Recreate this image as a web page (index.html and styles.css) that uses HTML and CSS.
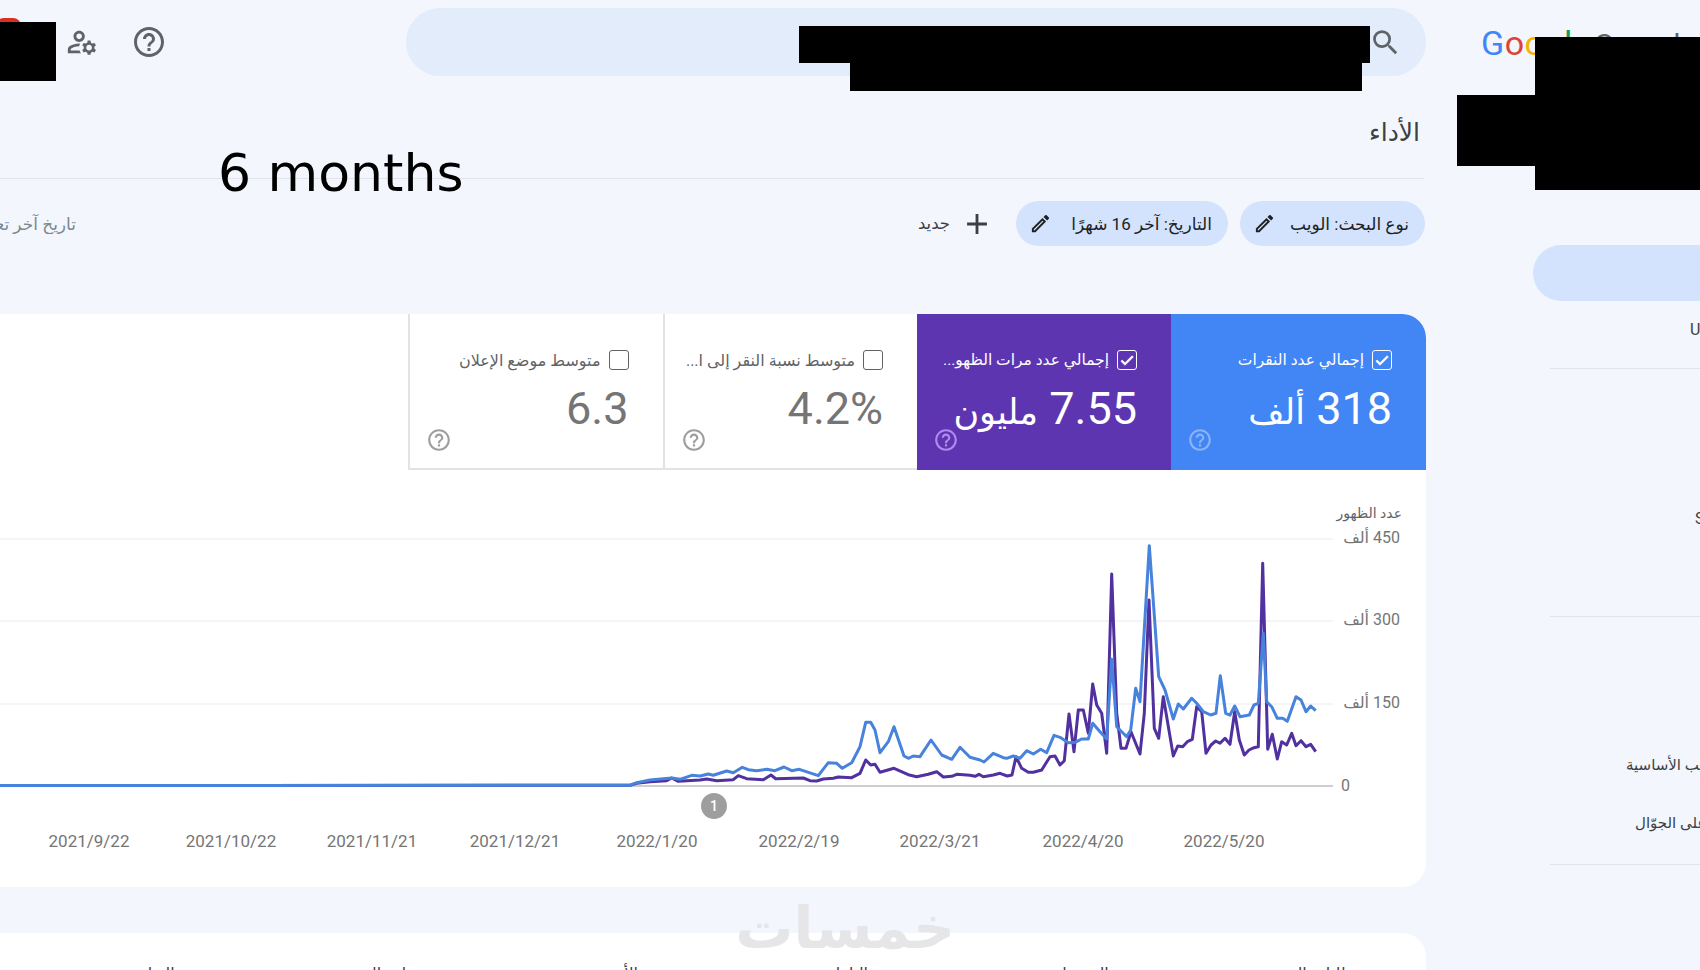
FILE: index.html
```html
<!DOCTYPE html>
<html lang="ar" dir="rtl">
<head>
<meta charset="UTF-8">
<title>الأداء - Search Console</title>
<link rel="stylesheet" href="styles.css">
</head>
<body>
<aside class="side">
    <div class="logo"><span class="g-blue">G</span><span class="g-red">o</span><span class="g-yellow">o</span><span class="g-blue">g</span><span class="g-green">l</span><span class="g-red">e</span> <span class="logo-rest">Search Console</span></div>
    <div class="side-pill"></div>
    <div class="side-group side-first"><div class="side-item">URL</div></div>
    <div class="side-group side-second"><div class="side-item">SEO</div></div>
    <div class="side-group side-third">
        <div class="side-item side-vitals">مؤشرات أداء الويب الأساسية</div>
        <div class="side-item side-mobile">سهولة الاستخدام على الجوّال</div>
    </div>
</aside>

<main class="main">
    <header class="topbar">
        <div class="search">
            <svg class="search-icon" viewBox="0 0 24 24"><path d="M15.5 14h-.79l-.28-.27A6.47 6.47 0 0 0 16 9.5 6.5 6.5 0 1 0 9.5 16c1.61 0 3.09-.59 4.23-1.57l.27.28v.79l5 4.99L20.49 19l-4.99-5zm-6 0C7.01 14 5 11.99 5 9.5S7.01 5 9.5 5 14 7.01 14 9.5 11.99 14 9.5 14z"/></svg>
        </div>
        <div class="top-icons">
            <svg class="help-big" viewBox="0 0 24 24"><path d="M11 18h2v-2h-2v2zm1-16C6.48 2 2 6.48 2 12s4.48 10 10 10 10-4.48 10-10S17.52 2 12 2zm0 18c-4.41 0-8-3.59-8-8s3.59-8 8-8 8 3.59 8 8-3.59 8-8 8zm0-14c-2.21 0-4 1.79-4 4h2c0-1.1.9-2 2-2s2 .9 2 2c0 2-3 1.75-3 5h2c0-2.25 3-2.5 3-5 0-2.21-1.79-4-4-4z"/></svg>
            <svg class="users-gear" viewBox="0 0 24 24"><path d="M4 18v-.65c0-.34.16-.66.41-.81C6.1 15.53 8.03 15 10 15c.03 0 .05 0 .08.01.1-.7.3-1.37.59-1.98-.22-.02-.44-.03-.67-.03-2.42 0-4.68.67-6.61 1.82-.88.52-1.39 1.5-1.39 2.53V20h9.26c-.42-.6-.75-1.28-.97-2H4zM10 12c2.21 0 4-1.79 4-4s-1.79-4-4-4-4 1.79-4 4 1.79 4 4 4zm0-6c1.1 0 2 .9 2 2s-.9 2-2 2-2-.9-2-2 .9-2 2-2zM20.75 16c0-.22-.03-.42-.06-.63l1.14-1.01-1-1.73-1.45.49c-.32-.27-.68-.48-1.08-.63L18 11h-2l-.3 1.49c-.4.15-.76.36-1.08.63l-1.45-.49-1 1.73 1.14 1.01c-.03.21-.06.41-.06.63s.03.42.06.63l-1.14 1.01 1 1.73 1.45-.49c.32.27.68.48 1.08.63L16 21h2l.3-1.49c.4-.15.76-.36 1.08-.63l1.45.49 1-1.73-1.14-1.01c.03-.21.06-.41.06-.63zM17 18c-1.1 0-2-.9-2-2s.9-2 2-2 2 .9 2 2-.9 2-2 2z"/></svg>
        </div>
    </header>

    <h1 class="page-title">الأداء</h1>

    <div class="filters">
        <button class="chip chip-type"><span>نوع البحث: الويب</span>
            <svg viewBox="0 0 24 24"><path d="M14.06 9.02l.92.92L5.92 19H5v-.92l9.06-9.06M17.66 3c-.25 0-.51.1-.7.29l-1.83 1.83 3.75 3.75 1.83-1.83c.39-.39.39-1.02 0-1.41l-2.34-2.34c-.2-.2-.45-.29-.71-.29zm-3.6 3.19L3 17.25V21h3.75L17.81 9.94l-3.75-3.75z"/></svg>
        </button>
        <button class="chip chip-date"><span>التاريخ: آخر 16 شهرًا</span>
            <svg viewBox="0 0 24 24"><path d="M14.06 9.02l.92.92L5.92 19H5v-.92l9.06-9.06M17.66 3c-.25 0-.51.1-.7.29l-1.83 1.83 3.75 3.75 1.83-1.83c.39-.39.39-1.02 0-1.41l-2.34-2.34c-.2-.2-.45-.29-.71-.29zm-3.6 3.19L3 17.25V21h3.75L17.81 9.94l-3.75-3.75z"/></svg>
        </button>
        <button class="add-filter">
            <svg viewBox="0 0 24 24"><path d="M19 13h-6v6h-2v-6H5v-2h6V5h2v6h6v2z"/></svg>
            <span>جديد</span>
        </button>
        <div class="last-update">تاريخ آخر تعديل</div>
    </div>

    <section class="card">
        <div class="tabs">
            <div class="tab tab-blue">
                <label class="tab-label"><span class="check"><svg viewBox="0 0 24 24"><path d="M9 16.2 4.8 12l-1.9 1.9L9 20 21.5 7.5 19.6 5.6z"/></svg></span><span>إجمالي عدد النقرات</span></label>
                <div class="tab-value">318 <span class="unit">ألف</span></div>
                <svg class="tab-help" viewBox="0 0 24 24"><path d="M11 18h2v-2h-2v2zm1-16C6.48 2 2 6.48 2 12s4.48 10 10 10 10-4.48 10-10S17.52 2 12 2zm0 18c-4.41 0-8-3.59-8-8s3.59-8 8-8 8 3.59 8 8-3.59 8-8 8zm0-14c-2.21 0-4 1.79-4 4h2c0-1.1.9-2 2-2s2 .9 2 2c0 2-3 1.75-3 5h2c0-2.25 3-2.5 3-5 0-2.21-1.79-4-4-4z"/></svg>
            </div>
            <div class="tab tab-purple">
                <label class="tab-label"><span class="check"><svg viewBox="0 0 24 24"><path d="M9 16.2 4.8 12l-1.9 1.9L9 20 21.5 7.5 19.6 5.6z"/></svg></span><span>إجمالي عدد مرات الظهو...</span></label>
                <div class="tab-value">7.55 <span class="unit">مليون</span></div>
                <svg class="tab-help" viewBox="0 0 24 24"><path d="M11 18h2v-2h-2v2zm1-16C6.48 2 2 6.48 2 12s4.48 10 10 10 10-4.48 10-10S17.52 2 12 2zm0 18c-4.41 0-8-3.59-8-8s3.59-8 8-8 8 3.59 8 8-3.59 8-8 8zm0-14c-2.21 0-4 1.79-4 4h2c0-1.1.9-2 2-2s2 .9 2 2c0 2-3 1.75-3 5h2c0-2.25 3-2.5 3-5 0-2.21-1.79-4-4-4z"/></svg>
            </div>
            <div class="tab">
                <label class="tab-label"><span class="check"></span><span>متوسط نسبة النقر إلى ا...</span></label>
                <div class="tab-value">4.2%</div>
                <svg class="tab-help" viewBox="0 0 24 24"><path d="M11 18h2v-2h-2v2zm1-16C6.48 2 2 6.48 2 12s4.48 10 10 10 10-4.48 10-10S17.52 2 12 2zm0 18c-4.41 0-8-3.59-8-8s3.59-8 8-8 8 3.59 8 8-3.59 8-8 8zm0-14c-2.21 0-4 1.79-4 4h2c0-1.1.9-2 2-2s2 .9 2 2c0 2-3 1.75-3 5h2c0-2.25 3-2.5 3-5 0-2.21-1.79-4-4-4z"/></svg>
            </div>
            <div class="tab tab-last">
                <label class="tab-label"><span class="check"></span><span>متوسط موضع الإعلان</span></label>
                <div class="tab-value">6.3</div>
                <svg class="tab-help" viewBox="0 0 24 24"><path d="M11 18h2v-2h-2v2zm1-16C6.48 2 2 6.48 2 12s4.48 10 10 10 10-4.48 10-10S17.52 2 12 2zm0 18c-4.41 0-8-3.59-8-8s3.59-8 8-8 8 3.59 8 8-3.59 8-8 8zm0-14c-2.21 0-4 1.79-4 4h2c0-1.1.9-2 2-2s2 .9 2 2c0 2-3 1.75-3 5h2c0-2.25 3-2.5 3-5 0-2.21-1.79-4-4-4z"/></svg>
            </div>
        </div>

        <svg class="chart" viewBox="0 470 1426 417">
            <line class="grid" x1="0" y1="539" x2="1333" y2="539"/>
            <line class="grid" x1="0" y1="621" x2="1333" y2="621"/>
            <line class="grid" x1="0" y1="704" x2="1333" y2="704"/>
            <line class="axis" x1="0" y1="786" x2="1333" y2="786"/>

            <text class="y-title" x="1402" y="518">عدد الظهور</text>
            <text class="y-label" x="1400" y="543">450 ألف</text>
            <text class="y-label" x="1400" y="625">300 ألف</text>
            <text class="y-label" x="1400" y="708">150 ألف</text>
            <text class="y-label" x="1350" y="791">0</text>

            <!-- impressions -->
            <polyline class="line-purple" points="0,785.5 630,785.3 636.7,783.3 650,781.7 666.7,780.7 671.7,778 678.3,781.3 700,780 706.7,779 716.7,780.7 733.3,779.7 738.3,775.7 746.7,778.7 763.3,779.7 771,775 775.7,778.7 803.3,778 810,780.7 816.7,781 823.3,779 833.3,778.3 838.3,777 851.7,777.7 860,773.3 865.7,760 870.7,765 875,764.3 880,772.3 894,768.3 908.3,774.7 916.7,776.7 928.3,774.3 936.7,771.7 943.3,777 951.7,776.3 956.7,774.3 970,775.3 975,776.3 979,774.3 983.3,776.7 993.3,775 1000,773.3 1007.3,776 1012,775 1016,756.7 1021.7,768.3 1028.3,772.3 1033.3,772.3 1041.7,770 1050,756.7 1055,756 1060,765 1064.3,760.7 1069,714 1074,751.7 1078.3,710 1083.3,710 1088.3,733.3 1092.7,684 1096.7,705 1101.7,713.3 1106.7,753.3 1111.7,574 1116.7,713.3 1121,748.3 1126,748.3 1131,731.7 1140,754 1144.3,713.3 1149,600 1154.3,728.3 1158.7,738.3 1163.3,696.7 1173.3,756 1177.7,746 1182.7,746.7 1187.3,741.7 1192.3,739.3 1196.7,706.7 1201.7,711.7 1206,753.3 1211,745 1215.7,741 1220,743.3 1225,738.3 1230,744.3 1234.7,711.7 1239.3,740 1244.3,755 1249,750 1254,747.7 1258.3,746.7 1262.7,563.3 1267.7,749.3 1272.3,734.3 1277.3,759 1281.7,741.7 1286.7,745 1291.7,733.3 1296,745.7 1301,740.7 1306,746.7 1310.7,744.3 1315.7,751.7"/>
            <!-- clicks -->
            <polyline class="line-blue" points="0,785.5 630,785.3 636.7,782.7 650,780 671.7,778 680,779.3 691.7,775.3 700,776 708.3,774 713.3,775.3 726.7,771 733.3,772.7 742.3,767.3 748.3,769.7 756.7,770.7 766.7,769.3 775,770.7 784,767 791.7,770.7 799.3,769.3 818.3,775.7 828.3,762.7 836.7,763.3 842.3,768.3 851.7,762.7 860,746.7 865.7,722.3 870.7,722.3 875,730 880,752.7 888.3,741.7 894,726.7 904,756 908.3,758.3 913.3,756 920,756.7 931,740 941.7,755 951.7,759.3 960,747.3 970,757.3 980,760 984,762 993.3,753.3 1003.3,757.7 1006.7,758.3 1013.3,756 1020,758.3 1026.7,750.7 1033.3,754 1040.7,749.3 1046.7,752.7 1054,735.3 1060,737.3 1068.3,742.7 1075,742.3 1081.7,739 1088.3,739 1092.7,723.3 1100,731.7 1106.7,739 1111.7,659.3 1116.7,726.7 1126.7,736.7 1130.7,730 1135.7,688.3 1140,701.7 1149.3,545.7 1158.7,676.7 1165,690 1173.3,719 1178.3,704 1183.3,709 1191.7,698.3 1196.7,703.3 1203.3,711.7 1210.7,715 1216,713.3 1220.3,675.7 1225.7,713.3 1230,715 1234.7,706 1240,716.7 1249.3,715 1254,705 1258.3,703.3 1263.3,633.3 1266.7,701.7 1271.7,706.7 1277.3,718.3 1282.7,718.3 1287.3,721.3 1296,696.7 1301,700 1306,711.7 1310.7,706 1315.7,710.7"/>

            <circle class="note-dot" cx="714" cy="806" r="13"/>
            <text class="note-num" x="714" y="811">1</text>

            <text class="x-label" x="89" y="847">2021/9/22</text>
            <text class="x-label" x="231" y="847">2021/10/22</text>
            <text class="x-label" x="372" y="847">2021/11/21</text>
            <text class="x-label" x="515" y="847">2021/12/21</text>
            <text class="x-label" x="657" y="847">2022/1/20</text>
            <text class="x-label" x="799" y="847">2022/2/19</text>
            <text class="x-label" x="940" y="847">2022/3/21</text>
            <text class="x-label" x="1083" y="847">2022/4/20</text>
            <text class="x-label" x="1224" y="847">2022/5/20</text>
        </svg>
    </section>

    <section class="card-bottom">
        <div class="table-tab">طلبات البحث</div>
        <div class="table-tab">الصفحات</div>
        <div class="table-tab">البلدان</div>
        <div class="table-tab">الأجهزة</div>
        <div class="table-tab">مظهر البحث</div>
        <div class="table-tab">التواريخ</div>
    </section>
</main>

<!-- stuff lying on top of the page -->
<div class="over-text">6 months</div>
<div class="watermark">خمسات</div>
<div class="badge"></div>
<div class="blackout b-account"></div>
<div class="blackout b-search"></div>
<div class="blackout b-search2"></div>
<div class="blackout b-side"></div>
<div class="blackout b-side2"></div>
</body>
</html>
```

FILE: styles.css
```css
* {
    padding: 0;
    margin: 0;
    box-sizing: border-box;
}
html, body {
    width: 1700px;
    height: 970px;
    overflow: hidden;
}
body {
    display: flex;
    position: relative;
    background-color: #f3f6fd;
    font-family: Roboto, "DejaVu Sans", sans-serif;
    color: #3c4043;
}

/* right column */
.side {
    flex: 0 0 274px;
    overflow: hidden;
    direction: ltr;
    padding-top: 22px;
}
.logo {
    height: 42px;
    font-size: 34px;
    line-height: 42px;
    padding-left: 55px;
    white-space: nowrap;
    letter-spacing: 0.5px;
    word-spacing: -5px;
}
.g-blue { color: #4285f4; }
.g-red { color: #db4437; }
.g-yellow { color: #f4b400; }
.g-green { color: #0f9d58; }
.logo-rest { color: #5f6368; font-size: 30px; word-spacing: 6px; }
.side-pill {
    margin: 181px 0 0 107px;
    width: 300px;
    height: 56px;
    border-radius: 28px 0 0 28px;
    background-color: #d3e3fd;
}
.side-group {
    margin-left: 124px;
    width: 300px;
    border-bottom: 1px solid #e0e4ea;
}
.side-item {
    font-size: 16px;
    line-height: 20px;
    color: #3c4043;
    white-space: nowrap;
}
.side-first { height: 68px; padding-top: 19px; }
.side-first .side-item { padding-left: 140px; }
.side-second { height: 248px; padding-top: 140px; }
.side-second .side-item { padding-left: 145px; }
.side-third { height: 248px; padding-top: 138px; }
.side-vitals, .side-mobile {
    direction: rtl;
    text-align: left;
    font-size: 15px;
}
.side-vitals { padding-left: 76px; margin-bottom: 38px; }
.side-mobile { padding-left: 85px; }

/* main column */
.main {
    flex: 0 0 1426px;
}
.topbar {
    display: flex;
    align-items: center;
    height: 84px;
    padding: 8px 0;
}
.search {
    display: flex;
    align-items: center;
    width: 1020px;
    height: 68px;
    padding-right: 24px;
    border-radius: 34px;
    background-color: #e3ecfb;
}
.search-icon {
    width: 33px;
    height: 33px;
    fill: #5f6368;
}
.top-icons {
    display: flex;
    align-items: center;
    gap: 32px;
    margin-right: auto;
    padding-left: 65px;
}
.users-gear { width: 34px; height: 34px; fill: #5f6368; }
.help-big { width: 36px; height: 36px; fill: #5f6368; }

.page-title {
    height: 95px;
    width: 1424px;
    margin-right: 2px;
    padding: 34px 4px 0 0;
    border-bottom: 1px solid #e0e4ea;
    font-size: 25px;
    font-weight: 400;
    line-height: 30px;
    color: #3c4043;
}

.filters {
    display: flex;
    align-items: center;
    gap: 12px;
    height: 45px;
    margin-top: 22px;
    padding-right: 1px;
}
.chip {
    display: flex;
    align-items: center;
    justify-content: space-between;
    height: 45px;
    padding: 0 16px;
    border: none;
    border-radius: 23px;
    background-color: #d3e3fd;
    font-family: inherit;
    font-size: 17px;
    white-space: nowrap;
    color: #202124;
}
.chip svg { width: 23px; height: 23px; fill: #202124; margin-left: -3px; }
.chip-type { width: 185px; }
.chip-date { width: 212px; }
.add-filter {
    display: flex;
    align-items: center;
    gap: 10px;
    margin-right: 10px;
    border: none;
    background: none;
    font-family: inherit;
    font-size: 16.5px;
    color: #3c4043;
}
.add-filter svg { width: 34px; height: 34px; fill: #3c4043; }
.last-update {
    margin-right: auto;
    width: 76px;
    overflow: hidden;
    white-space: nowrap;
    font-size: 17px;
    color: #80868b;
}

.card {
    height: 573px;
    margin-top: 68px;
    overflow: hidden;
    background-color: #fff;
    border-radius: 0 24px 24px 0;
}
.tabs {
    display: flex;
    height: 156px;
}
.tab {
    display: flex;
    flex-direction: column;
    flex: 0 0 254.5px;
    min-width: 0;
    padding: 36px 34px 0 18px;
    border-left: 2px solid #e3e3e3;
    border-bottom: 2px solid #e3e3e3;
    color: #5f6368;
}
.tab-blue { flex-basis: 255px; border: none; background-color: #4285f4; color: #fff; }
.tab-purple { flex-basis: 254px; border: none; background-color: #5e35b1; color: #fff; }
.tab-label {
    display: flex;
    align-items: center;
    gap: 8px;
    height: 20px;
    font-size: 16px;
    white-space: nowrap;
}
.tab-blue .tab-label, .tab-purple .tab-label { font-size: 15.5px; }
.check {
    display: flex;
    flex: 0 0 20px;
    height: 20px;
    align-items: center;
    justify-content: center;
    border: 1.5px solid #5f6368;
    border-radius: 3px;
}
.tab-blue .check, .tab-purple .check { border-color: #fff; }
.check svg { width: 16px; height: 16px; fill: #fff; stroke: #fff; stroke-width: 1; }
.tab-value {
    height: 38px;
    margin-top: 20px;
    font-size: 45px;
    line-height: 38px;
    color: #757575;
    white-space: nowrap;
}
.unit { font-size: 35px; }
.tab-blue .tab-value, .tab-purple .tab-value { color: #fff; }
.tab-help {
    align-self: flex-end;
    width: 26px;
    height: 26px;
    margin: -1px 0 0 -2px;
    fill: #9e9e9e;
}
.tab-blue .tab-help { fill: #8ab4f8; }
.tab-purple .tab-help { fill: #b388ef; }

.chart {
    display: block;
    width: 1426px;
    height: 417px;
    direction: ltr;
}
.grid { stroke: #e8eaed; stroke-width: 1; }
.axis { stroke: #9aa0a6; stroke-width: 1; }
.line-blue, .line-purple {
    fill: none;
    stroke-width: 3;
    stroke-linejoin: round;
}
.line-blue { stroke: #4782dc; }
.line-purple { stroke: #51309f; }
.y-title {
    direction: rtl;
    font-size: 14px;
    fill: #5f6368;
}
.y-label {
    direction: rtl;
    font-size: 16px;
    fill: #757575;
}
.x-label {
    font-size: 17px;
    text-anchor: middle;
    fill: #757575;
}
.note-dot { fill: #9e9e9e; }
.note-num {
    font-size: 14px;
    font-weight: 500;
    text-anchor: middle;
    fill: #fff;
}

.card-bottom {
    display: flex;
    height: 100px;
    margin-top: 46px;
    padding-top: 29px;
    background-color: #fff;
    border-radius: 0 24px 0 0;
}
.table-tab {
    flex: 0 0 232px;
    padding-top: 2px;
    text-align: center;
    font-size: 16px;
    color: #3c4043;
}

/* overlays */
.over-text {
    position: absolute;
    left: 218px;
    top: 143px;
    direction: ltr;
    font-family: "DejaVu Sans", sans-serif;
    font-size: 52px;
    line-height: 60px;
    color: #000;
}
.watermark {
    position: absolute;
    left: 745px;
    top: 893px;
    width: 210px;
    text-align: center;
    font-family: "DejaVu Sans", sans-serif;
    font-size: 58px;
    font-weight: bold;
    line-height: 70px;
    color: #e6e6e8;
}
.badge {
    position: absolute;
    left: -4px;
    top: 18px;
    width: 25px;
    height: 24px;
    border-radius: 8px;
    background-color: #d93025;
}
.blackout {
    position: absolute;
    background-color: #000;
}
.b-account { left: 0; top: 22px; width: 56px; height: 59px; }
.b-search { left: 799px; top: 26px; width: 571px; height: 37px; }
.b-search2 { left: 850px; top: 63px; width: 512px; height: 28px; }
.b-side { left: 1535px; top: 37px; width: 165px; height: 153px; }
.b-side2 { left: 1457px; top: 95px; width: 78px; height: 71px; }
```
